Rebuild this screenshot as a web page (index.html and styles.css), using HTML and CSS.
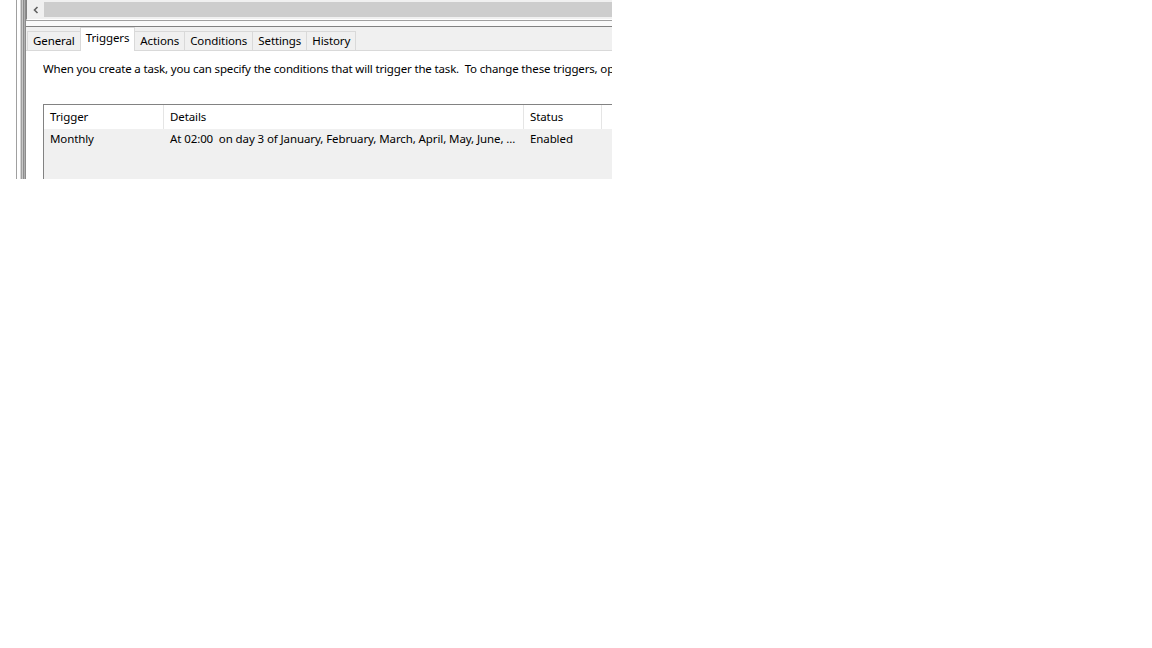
FILE: index.html
```
<!DOCTYPE html>
<html>
<head>
<meta charset="utf-8">
<link rel="stylesheet" href="styles.css">
</head>
<body>
<div class="frame">
  <div class="gutter"></div>
  <div class="vline"></div>
  <div class="gap"></div>
  <div class="splitter"></div>
  <div class="panel">
    <div class="hscroll">
      <div class="arrow">
        <svg width="8" height="8" viewBox="0 0 8 8"><path d="M5.5 1 L2.5 4 L5.5 7" fill="none" stroke="#606060" stroke-width="1.6"/></svg>
      </div>
      <div class="thumb"></div>
    </div>
    <div class="sep"></div>
    <div class="tabstrip">
      <div class="tab">General</div>
      <div class="tab active">Triggers</div>
      <div class="tab">Actions</div>
      <div class="tab">Conditions</div>
      <div class="tab">Settings</div>
      <div class="tab">History</div>
    </div>
    <div class="page">
      <div class="desc">When you create a task, you can specify the conditions that will trigger the task.&nbsp; To change these triggers, op</div>
      <div class="list">
        <div class="row head">
          <div class="cell c1">Trigger</div>
          <div class="cell c2">Details</div>
          <div class="cell c3">Status</div>
          <div class="cell c4"></div>
        </div>
        <div class="body">
          <div class="row item">
            <div class="cell c1">Monthly</div>
            <div class="cell c2">At 02:00&nbsp; on day 3 of January, February, March, April, May, June, ...</div>
            <div class="cell c3">Enabled</div>
            <div class="cell c4"></div>
          </div>
        </div>
      </div>
    </div>
  </div>
</div>
</body>
</html>
```
FILE: styles.css
```
html, body {
  margin: 0;
  padding: 0;
  background: #ffffff;
}
body {
  font-family: "Noto Sans", "Liberation Sans", sans-serif;
  font-size: 11.5px;
  letter-spacing: -0.1px;
  color: #000;
}
.frame {
  display: flex;
  width: 612px;
  height: 179px;
  overflow: hidden;
}
.gutter { width: 16px; flex: none; }
.vline { width: 1px; flex: none; background: #a0a0a0; }
.gap { width: 3px; flex: none; }
.splitter {
  width: 6px;
  flex: none;
  background: linear-gradient(to right,
    #d4d4d4 0 1px, #a0a0a0 1px 2px, #c8c8c8 2px 3px,
    #8c8c8c 3px 4px, #b0b0b0 4px 5px, #8c8c8c 5px 6px);
}
.panel {
  flex: 1;
  display: flex;
  flex-direction: column;
  min-width: 0;
  overflow: hidden;
}
.hscroll {
  display: flex;
  background: #f0f0f0;
  border-left: 1px solid #828282;
  padding-top: 2px;
  box-sizing: border-box;
  flex: none;
  border-bottom: 1px solid #ffffff;
  height: 20px;
}
.arrow {
  width: 17px;
  height: 15px;
  flex: none;
  display: flex;
  align-items: center;
  justify-content: center;
}
.thumb {
  flex: 1;
  height: 15px;
  background: #cdcdcd;
}
.sep {
  height: 7px;
  flex: none;
  border-top: 1px solid #a0a0a0;
  border-bottom: 1px solid #828282;
  box-sizing: border-box;
  background: #fafafa;
}
.tabstrip {
  height: 24px;
  flex: none;
  display: flex;
  align-items: flex-end;
  background: #f0f0f0;
  border-bottom: 1px solid #d9d9d9;
  padding-left: 1px;
  box-sizing: border-box;
}
.tab {
  height: 19px;
  line-height: 18px;
  padding: 0 5px;
  border: 1px solid #d9d9d9;
  border-bottom: none;
  margin-right: -1px;
  box-sizing: border-box;
  background: #f0f0f0;
  white-space: nowrap;
}
.tab.active {
  height: 24px;
  line-height: 20px;
  background: #ffffff;
  margin-bottom: -1px;
  padding: 0 5px;
  position: relative;
}
.page {
  flex: 1;
  background: #fff;
  padding-left: 17px;
  overflow: hidden;
}
.desc {
  margin: 10px 0 0 0;
  white-space: nowrap;
  line-height: 16px;
  letter-spacing: -0.16px;
  overflow: hidden;
}
.list {
  margin-top: 27px;
  border-top: 1px solid #828282;
  border-left: 1px solid #828282;
  height: 100px;
}
.row {
  display: flex;
  white-space: nowrap;
}
.head {
  height: 24px;
  line-height: 23px;
  background: #fff;
}
.head .cell {
  border-right: 1px solid #e5e5e5;
}
.body {
  background: #f0f0f0;
  height: 80px;
}
.item {
  line-height: 20px;
}
.cell {
  padding-left: 6px;
  box-sizing: border-box;
  overflow: hidden;
  flex: none;
}
.c1 { width: 120px; }
.c2 { width: 360px; }
.c3 { width: 78px; }
.c4 { width: 60px; }
```
